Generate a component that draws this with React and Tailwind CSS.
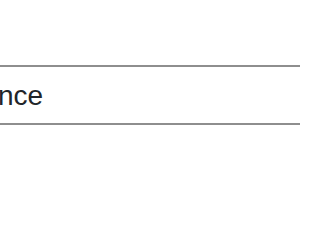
export default function App() {
  return (
    <div className="w-[300px] h-[210px] overflow-hidden bg-white" style={{ fontFamily: '"Liberation Sans", Arial, sans-serif' }}>
      <div className="pt-[65px] -ml-[70px]">
        <div className="w-[420px] h-[60px] border-y-2 border-[#8e8e8e] flex items-center pl-[12px] pt-[2px] text-[28px] text-[#212529]">
          Balance
        </div>
      </div>
    </div>
  )
}
